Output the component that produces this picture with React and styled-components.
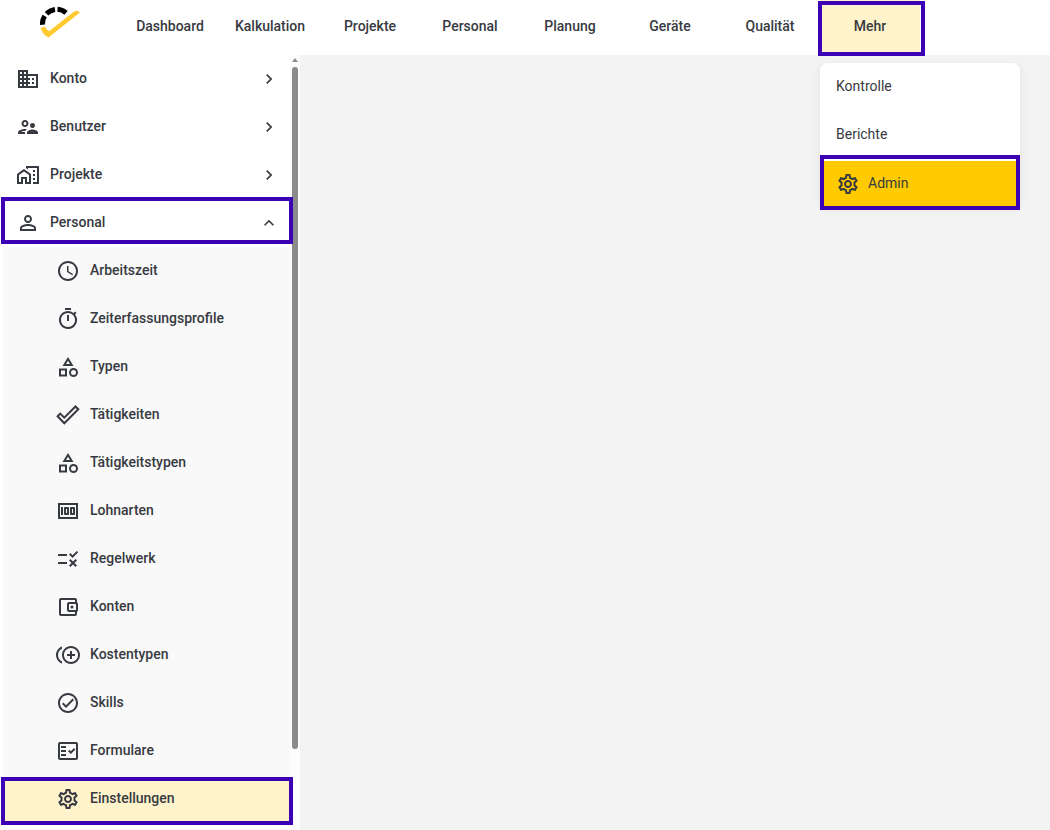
// App : 상단 메뉴, 좌측 관리자 메뉴, "Mehr" 드롭다운으로 구성된 관리 화면

import React from "react";
import styled, { css, createGlobalStyle, ThemeProvider } from "styled-components";
import {
  MdOutlineDomain,
  MdOutlineSupervisorAccount,
  MdOutlineMapsHomeWork,
  MdOutlinePersonOutline,
  MdOutlineChevronRight,
  MdOutlineExpandLess,
  MdOutlineAccessTime,
  MdOutlineTimer,
  MdOutlineCategory,
  MdOutlineMoney,
  MdOutlineRule,
  MdOutlineAccountBalanceWallet,
  MdOutlineControlPointDuplicate,
  MdOutlineCheckCircleOutline,
  MdOutlineFactCheck,
  MdOutlineSettings,
} from "react-icons/md";

const theme = {
  colors: {
    text: "#373a41",
    white: "#ffffff",
    content: "#f3f3f3",
    subMenu: "#f9f9f9",
    track: "#fcfcfc",
    selected: "#fff3cc",
    primary: "#ffcb00",
    frame: "#3c00b5",
    scrollbar: "#8b8b8b",
  },
  sizes: {
    header: "55px",
    row: "48px",
    sidebar: "300px",
    tab: "100px",
  },
};

// 속이 빈 체크 아이콘
const CheckOutline = () => (
  <svg viewBox="0 0 24 24" width="24" height="24" fill="none">
    <path
      d="M1.600 13.200L4.200 10.600L8.300 14.700L19.500 3.500L22.300 6.300L8.300 20.300Z"
      stroke="currentColor"
      strokeWidth="2"
    />
  </svg>
);

const Logo = () => (
  <svg viewBox="0 0 40 32" width="40" height="32" role="img" aria-label="Logo">
    <g fill="none" stroke="#000000" strokeWidth="5">
      <path d="M2.500 18.800A14.500 14.500 0 0 1 4.700 10" />
      <path d="M6.500 7.800A14.500 14.500 0 0 1 15 3.400" />
      <path d="M17.500 3.300A14.500 14.500 0 0 1 26 6.800" />
    </g>
    <path
      d="M0.500 22L5 20.500Q6 23.500 9 25.200L33.500 6Q37 3.500 40 6.500L8.500 31.500Q2.500 28.500 0.500 22Z"
      fill="#ffcb30"
    />
  </svg>
);

const tabs = [
  "Dashboard",
  "Kalkulation",
  "Projekte",
  "Personal",
  "Planung",
  "Geräte",
  "Qualität",
];

const groups = [
  { label: "Konto", Icon: MdOutlineDomain },
  { label: "Benutzer", Icon: MdOutlineSupervisorAccount },
  { label: "Projekte", Icon: MdOutlineMapsHomeWork },
  { label: "Personal", Icon: MdOutlinePersonOutline, open: true },
];

const personalItems = [
  { label: "Arbeitszeit", Icon: MdOutlineAccessTime },
  { label: "Zeiterfassungsprofile", Icon: MdOutlineTimer },
  { label: "Typen", Icon: MdOutlineCategory },
  { label: "Tätigkeiten", Icon: CheckOutline },
  { label: "Tätigkeitstypen", Icon: MdOutlineCategory },
  { label: "Lohnarten", Icon: MdOutlineMoney },
  { label: "Regelwerk", Icon: MdOutlineRule },
  { label: "Konten", Icon: MdOutlineAccountBalanceWallet },
  { label: "Kostentypen", Icon: MdOutlineControlPointDuplicate },
  { label: "Skills", Icon: MdOutlineCheckCircleOutline },
  { label: "Formulare", Icon: MdOutlineFactCheck },
  { label: "Einstellungen", Icon: MdOutlineSettings, selected: true },
];

const App = () => {
  return (
    <ThemeProvider theme={theme}>
      <GlobalStyle />
      <Page>
        <Header>
          <LogoLink href="#">
            <Logo />
          </LogoLink>
          <Tabs>
            {tabs.map((tab) => (
              <Tab key={tab} href="#">
                {tab}
              </Tab>
            ))}
            <More>
              <MoreBtn type="button" aria-expanded="true">
                Mehr
              </MoreBtn>
              <Dropdown>
                <DropdownLink href="#">Kontrolle</DropdownLink>
                <DropdownLink href="#">Berichte</DropdownLink>
                <AdminLink href="#">
                  <MdOutlineSettings />
                  <Label>Admin</Label>
                </AdminLink>
              </Dropdown>
            </More>
          </Tabs>
        </Header>

        <Body>
          <Sidebar>
            <Menu>
              {groups.map(({ label, Icon, open }) => (
                <GroupBtn key={label} type="button" $open={open} aria-expanded={!!open}>
                  <Icon />
                  <Label>{label}</Label>
                  <Arrow>{open ? <MdOutlineExpandLess /> : <MdOutlineChevronRight />}</Arrow>
                </GroupBtn>
              ))}
              <SubMenu>
                {personalItems.map(({ label, Icon, selected }) => (
                  <SubLink key={label} href="#" $selected={selected}>
                    <Icon />
                    <Label>{label}</Label>
                  </SubLink>
                ))}
              </SubMenu>
            </Menu>
            <Scrollbar>
              <ScrollArrow />
              <ScrollThumb />
            </Scrollbar>
          </Sidebar>
          <Content />
        </Body>
      </Page>
    </ThemeProvider>
  );
};

const GlobalStyle = createGlobalStyle`
  * {
    box-sizing: border-box;
  }

  body {
    margin: 0;
    color: ${theme.colors.text};
    font-family: Roboto, "Liberation Sans", sans-serif;
    font-size: 14px;
    font-weight: 500;
    line-height: 20px;
  }

  a {
    color: inherit;
    text-decoration: none;
  }

  button {
    padding: 0;
    border: 0;
    background: none;
    color: inherit;
    font: inherit;
    cursor: pointer;
  }
`;

// 강조 테두리
const Frame = css`
  position: relative;

  &::after {
    content: "";
    position: absolute;
    border: 4px solid ${({ theme }) => theme.colors.frame};
    pointer-events: none;
  }
`;

const Page = styled.div`
  display: flex;
  flex-direction: column;
  min-height: 100vh;
  background: ${({ theme }) => theme.colors.white};
`;

const Header = styled.header`
  display: flex;
  height: ${({ theme }) => theme.sizes.header};
`;

const LogoLink = styled.a`
  width: 120px;
  padding: 6px 0 0 40px;
`;

const Tabs = styled.nav`
  display: flex;
`;

const TabStyle = css`
  display: flex;
  align-items: center;
  justify-content: center;
  width: ${({ theme }) => theme.sizes.tab};
  height: 100%;
  padding-bottom: 4px;
`;

const Tab = styled.a`
  ${TabStyle}
`;

const More = styled.div`
  position: relative;
`;

const MoreBtn = styled.button`
  ${TabStyle}
  ${Frame}
  background: ${({ theme }) => theme.colors.selected};

  &::after {
    inset: 1px -5px -1px -2px;
  }
`;

const Dropdown = styled.div`
  position: absolute;
  top: calc(100% + 8px);
  left: 0;
  width: 200px;
  border-radius: 8px;
  background: ${({ theme }) => theme.colors.white};
  box-shadow: 0 2px 8px rgba(0, 0, 0, 0.08);
  font-weight: 400;
`;

const DropdownLink = styled.a`
  display: flex;
  align-items: center;
  height: ${({ theme }) => theme.sizes.row};
  padding: 0 16px 2px;
`;

const AdminLink = styled(DropdownLink)`
  ${Frame}
  gap: 8px;
  padding: 0 16px;
  border-top: 2px solid ${({ theme }) => theme.colors.white};
  background: ${({ theme }) => theme.colors.primary};

  svg {
    width: 24px;
    height: 24px;
  }

  &::after {
    inset: -6px 0 -3px;
  }
`;

const Body = styled.div`
  display: flex;
  flex: 1;
`;

const Sidebar = styled.aside`
  display: flex;
  width: ${({ theme }) => theme.sizes.sidebar};
`;

const Menu = styled.nav`
  flex: 1;
  padding-left: 3px;
`;

const Label = styled.span`
  flex: 1;
  padding-bottom: 2px;
  text-align: left;
`;

const RowStyle = css`
  display: flex;
  align-items: center;
  gap: 10px;
  width: 100%;
  height: ${({ theme }) => theme.sizes.row};

  svg {
    width: 24px;
    height: 24px;
  }
`;

const GroupBtn = styled.button`
  ${RowStyle}
  padding: 0 11px 0 13px;

  ${({ $open }) =>
    $open &&
    css`
      ${Frame}

      &::after {
        inset: -2px -3px 3px -2px;
      }
    `}
`;

const Arrow = styled.span`
  display: flex;

  && svg {
    width: 20px;
    height: 20px;
  }
`;

const SubMenu = styled.div`
  background: ${({ theme }) => theme.colors.subMenu};
`;

const SubLink = styled.a`
  ${RowStyle}
  padding: 0 10px 0 53px;

  ${({ $selected, theme }) =>
    $selected &&
    css`
      ${Frame}
      background: linear-gradient(${theme.colors.subMenu} 4px, ${theme.colors.selected} 4px);

      &::after {
        inset: 2px -3px -2px -2px;
      }
    `}
`;

const Scrollbar = styled.div`
  display: flex;
  flex-direction: column;
  align-items: center;
  width: 10px;
  padding-top: 3px;
  background: ${({ theme }) => theme.colors.track};
`;

const ScrollArrow = styled.div`
  border: 3px solid transparent;
  border-top-width: 0;
  border-bottom: 4px solid ${({ theme }) => theme.colors.scrollbar};
`;

const ScrollThumb = styled.div`
  width: 6px;
  height: 682px;
  margin-top: 5px;
  border-radius: 3px;
  background: ${({ theme }) => theme.colors.scrollbar};
`;

const Content = styled.main`
  flex: 1;
  background: ${({ theme }) => theme.colors.content};
`;

export default App;
